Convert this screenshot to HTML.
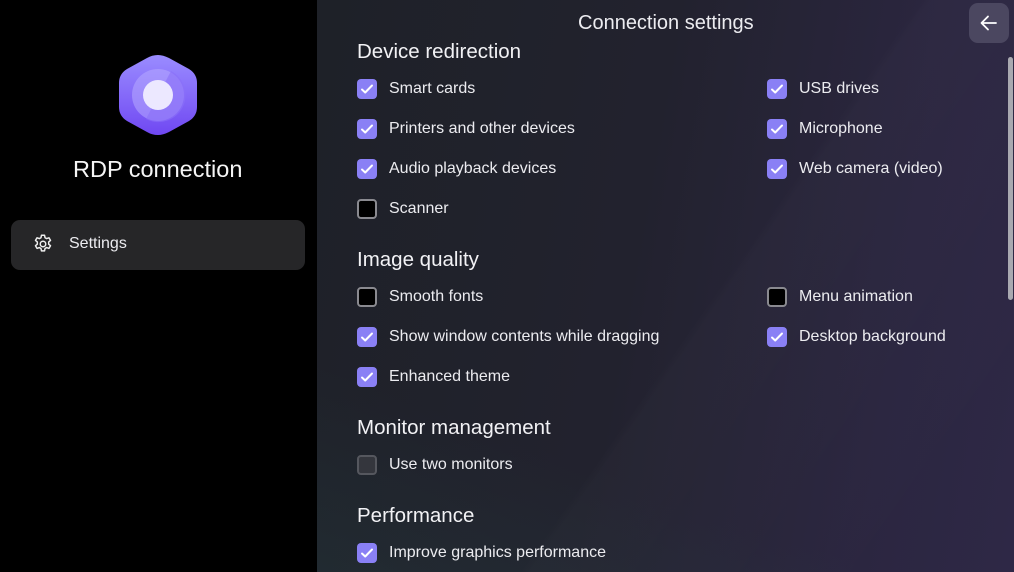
<!DOCTYPE html>
<html><head><meta charset="utf-8"><style>
*{margin:0;padding:0;box-sizing:border-box}
body{width:1014px;height:572px;overflow:hidden;font-family:"Liberation Sans",sans-serif;color:#ececf0;background:#000;position:relative}
.side{position:absolute;left:0;top:0;width:317px;height:572px;background:#000}
.main{position:absolute;left:317px;top:0;width:697px;height:572px;overflow:hidden;background:linear-gradient(100deg,#1e2128 0%,#22222e 45%,#2b2640 80%,#2e2846 100%)}
.sh1{position:absolute;left:0;top:0;width:697px;height:572px;background:linear-gradient(125deg,rgba(0,0,0,0) 55%,rgba(255,255,255,0.015) 56%,rgba(255,255,255,0.0) 90%)}
.sh2{position:absolute;left:0;top:0;width:697px;height:572px;background:linear-gradient(20deg,rgba(40,70,70,0.25) 0%,rgba(0,0,0,0) 25%)}
.t{position:absolute;font-size:16px;white-space:nowrap;margin-top:0px}
.h{position:absolute;font-size:20.5px;white-space:nowrap;color:#f2f2f5}
.cb{position:absolute;width:20px;height:20px;border-radius:4px;background:#8a80f5}
.cb svg{position:absolute;left:3px;top:4px}
.cb.off{background:#000;border:2px solid #8a8a90}
.cb.dis{background:#34363d;border:2px solid #55575e}
</style></head><body>
<div class="side">
<svg style="position:absolute;left:117px;top:53px" width="82" height="84" viewBox="0 0 82 84">
<defs><linearGradient id="g" x1="0" y1="0" x2="0" y2="1"><stop offset="0" stop-color="#9a8cff"/><stop offset="1" stop-color="#7048f2"/></linearGradient></defs>
<path d="M41 2 Q46 2 52 5 L72 16 Q80 21 80 30 L80 54 Q80 63 72 68 L52 79 Q46 82 41 82 Q35 82 30 79 L10 68 Q2 63 2 54 L2 30 Q2 21 10 16 L30 5 Q35 2 41 2Z" fill="url(#g)"/>
<circle cx="41" cy="42" r="26" fill="#b7a9ff" opacity="0.55"/>
<path d="M54 18 A26 26 0 0 1 29 66 Z" fill="#8a70f8" opacity="0.6"/>
<circle cx="41" cy="42" r="15" fill="#ece8ff"/>
</svg>
<div class="t" style="left:73px;top:156px;font-size:23.5px;color:#f5f5f5">RDP connection</div>
<div style="position:absolute;left:11px;top:220px;width:294px;height:50px;border-radius:9px;background:#262628"></div>
<svg style="position:absolute;left:32px;top:233px" width="22" height="22" viewBox="0 0 24 24" fill="none" stroke="#eee" stroke-width="1.6" stroke-linejoin="round"><circle cx="12" cy="12" r="3"/><path d="M10.3 2.5h3.4l.5 2.6 1.8 1 2.5-.9 1.7 2.9-2 1.7v2.4l2 1.7-1.7 2.9-2.5-.9-1.8 1-.5 2.6h-3.4l-.5-2.6-1.8-1-2.5.9-1.7-2.9 2-1.7v-2.4l-2-1.7 1.7-2.9 2.5.9 1.8-1z"/></svg>
<div class="t" style="left:69px;top:235px">Settings</div>
</div>
<div class="main"><div class="sh1"></div><div class="sh2"></div>
<div class="t" style="left:261px;top:12px;font-size:20px">Connection settings</div>
<div style="position:absolute;left:652px;top:3px;width:40px;height:40px;border-radius:9px;background:#4b4760"></div>
<svg style="position:absolute;left:662px;top:13px" width="20" height="20" viewBox="0 0 20 20" fill="none" stroke="#fff" stroke-width="1.8" stroke-linecap="round" stroke-linejoin="round"><path d="M17 10H3M9 3.5L2.5 10 9 16.5"/></svg>
<div style="position:absolute;left:691px;top:57px;width:5px;height:243px;border-radius:3px;background:#a9a9b0"></div>
</div>
<div class="h" style="left:357px;top:40px">Device redirection</div>
<div class="h" style="left:357px;top:248px">Image quality</div>
<div class="h" style="left:357px;top:416px">Monitor management</div>
<div class="h" style="left:357px;top:504px">Performance</div>

<div class="cb" style="left:357px;top:79px"><svg width="14" height="12" viewBox="0 0 14 12"><path d="M2 6.5l3.2 3L12 2.5" fill="none" stroke="#fff" stroke-width="2" stroke-linecap="round" stroke-linejoin="round"/></svg></div><div class="t" style="left:389px;top:80px">Smart cards</div>
<div class="cb" style="left:357px;top:119px"><svg width="14" height="12" viewBox="0 0 14 12"><path d="M2 6.5l3.2 3L12 2.5" fill="none" stroke="#fff" stroke-width="2" stroke-linecap="round" stroke-linejoin="round"/></svg></div><div class="t" style="left:389px;top:120px">Printers and other devices</div>
<div class="cb" style="left:357px;top:159px"><svg width="14" height="12" viewBox="0 0 14 12"><path d="M2 6.5l3.2 3L12 2.5" fill="none" stroke="#fff" stroke-width="2" stroke-linecap="round" stroke-linejoin="round"/></svg></div><div class="t" style="left:389px;top:160px">Audio playback devices</div>
<div class="cb off" style="left:357px;top:199px"></div><div class="t" style="left:389px;top:200px">Scanner</div>
<div class="cb" style="left:767px;top:79px"><svg width="14" height="12" viewBox="0 0 14 12"><path d="M2 6.5l3.2 3L12 2.5" fill="none" stroke="#fff" stroke-width="2" stroke-linecap="round" stroke-linejoin="round"/></svg></div><div class="t" style="left:799px;top:80px">USB drives</div>
<div class="cb" style="left:767px;top:119px"><svg width="14" height="12" viewBox="0 0 14 12"><path d="M2 6.5l3.2 3L12 2.5" fill="none" stroke="#fff" stroke-width="2" stroke-linecap="round" stroke-linejoin="round"/></svg></div><div class="t" style="left:799px;top:120px">Microphone</div>
<div class="cb" style="left:767px;top:159px"><svg width="14" height="12" viewBox="0 0 14 12"><path d="M2 6.5l3.2 3L12 2.5" fill="none" stroke="#fff" stroke-width="2" stroke-linecap="round" stroke-linejoin="round"/></svg></div><div class="t" style="left:799px;top:160px">Web camera (video)</div>

<div class="cb off" style="left:357px;top:287px"></div><div class="t" style="left:389px;top:288px">Smooth fonts</div>
<div class="cb" style="left:357px;top:327px"><svg width="14" height="12" viewBox="0 0 14 12"><path d="M2 6.5l3.2 3L12 2.5" fill="none" stroke="#fff" stroke-width="2" stroke-linecap="round" stroke-linejoin="round"/></svg></div><div class="t" style="left:389px;top:328px">Show window contents while dragging</div>
<div class="cb" style="left:357px;top:367px"><svg width="14" height="12" viewBox="0 0 14 12"><path d="M2 6.5l3.2 3L12 2.5" fill="none" stroke="#fff" stroke-width="2" stroke-linecap="round" stroke-linejoin="round"/></svg></div><div class="t" style="left:389px;top:368px">Enhanced theme</div>
<div class="cb off" style="left:767px;top:287px"></div><div class="t" style="left:799px;top:288px">Menu animation</div>
<div class="cb" style="left:767px;top:327px"><svg width="14" height="12" viewBox="0 0 14 12"><path d="M2 6.5l3.2 3L12 2.5" fill="none" stroke="#fff" stroke-width="2" stroke-linecap="round" stroke-linejoin="round"/></svg></div><div class="t" style="left:799px;top:328px">Desktop background</div>

<div class="cb dis" style="left:357px;top:455px"></div><div class="t" style="left:389px;top:456px">Use two monitors</div>
<div class="cb" style="left:357px;top:543px"><svg width="14" height="12" viewBox="0 0 14 12"><path d="M2 6.5l3.2 3L12 2.5" fill="none" stroke="#fff" stroke-width="2" stroke-linecap="round" stroke-linejoin="round"/></svg></div><div class="t" style="left:389px;top:544px">Improve graphics performance</div>
</body></html>
